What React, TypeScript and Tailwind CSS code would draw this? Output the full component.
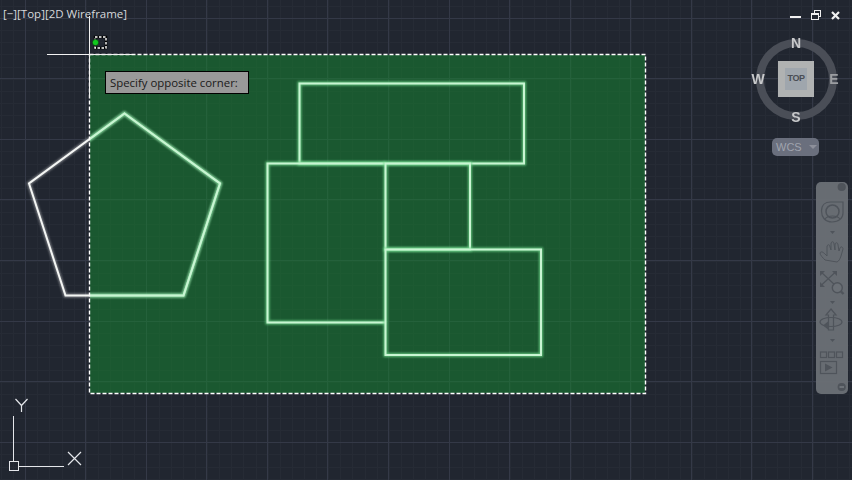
const VX = [25, 85, 146, 206, 267, 327, 388, 449, 509, 570, 630, 691, 751, 812];
const HY = [18, 78, 139, 199, 260, 321, 381, 442];

const PENTAGON = '124.500,113.500 220,183.500 183.500,295.500 65.500,295.500 29,183.500';
const SHAPES = [
  'M299.500 163.500V83.500H524V163.500Z',
  'M385.500 163.500H267.500V322.500H385.500',
  'M385.500 163.500H470V249.500H385.500Z',
  'M385.500 249.500H541V355H385.500Z',
];

const ICON = '#4f545b';

function minorLines() {
  const out: { x?: number; y?: number }[] = [];
  for (let i = 0; i < 72; i++) out.push({ x: 0.5 + Math.round(1 + i * 12.12) });
  for (let i = 0; i < 40; i++) out.push({ y: 0.5 + Math.round(6 + i * 12.12) });
  return out;
}

function Canvas() {
  return (
    <svg width="852" height="480" className="absolute inset-0 block">
      <defs>
        <filter id="glow" x="-20%" y="-20%" width="140%" height="140%">
          <feGaussianBlur stdDeviation="1.200" />
        </filter>
        <clipPath id="sel">
          <rect x="90" y="55" width="555" height="338" />
        </clipPath>
      </defs>

      {/* grid */}
      {minorLines().map((l, i) =>
        l.x !== undefined ? (
          <line key={i} x1={l.x} x2={l.x} y1="0" y2="480" stroke="#262b35" />
        ) : (
          <line key={i} x1="0" x2="852" y1={l.y} y2={l.y} stroke="#262b35" />
        ),
      )}
      {VX.map((x) => (
        <line key={x} x1={x + 0.5} x2={x + 0.5} y1="0" y2="480" stroke="#343947" />
      ))}
      {HY.map((y) => (
        <line key={y} x1="0" x2="852" y1={y + 0.5} y2={y + 0.5} stroke="#343947" />
      ))}

      {/* selection window */}
      <rect x="90" y="55" width="555" height="338" fill="#148a30" fillOpacity="0.5" />

      {/* pentagon, whiter outside the window */}
      <polygon points={PENTAGON} fill="none" stroke="#ffffff" strokeOpacity="0.4" strokeWidth="4" filter="url(#glow)" />
      <polygon points={PENTAGON} fill="none" stroke="#f4f6f4" strokeWidth="2" />
      <g clipPath="url(#sel)">
        <polygon points={PENTAGON} fill="none" stroke="#6fd68c" strokeOpacity="0.8" strokeWidth="4" filter="url(#glow)" />
        <polygon points={PENTAGON} fill="none" stroke="#c9f5d3" strokeWidth="2" />
      </g>

      {SHAPES.map((d) => (
        <g key={d} fill="none">
          <path d={d} stroke="#6fd68c" strokeOpacity="0.8" strokeWidth="4" filter="url(#glow)" />
          <path d={d} stroke="#c9f5d3" strokeWidth="2" />
        </g>
      ))}

      {/* selection outline */}
      <rect x="89.500" y="54.500" width="556" height="339" fill="none" stroke="#ffffff" strokeWidth="1.400" strokeDasharray="4 2" />

      {/* crosshair */}
      <path d="M47 54.500H132M89.500 16V98" stroke="#f2f2f2" fill="none" />
      <rect x="95" y="37" width="11" height="11" fill="none" stroke="#000000" strokeWidth="2.500" />
      <rect x="95" y="37" width="11" height="11" fill="none" stroke="#ffffff" strokeWidth="1.400" strokeDasharray="2.500 1.500" />
      <circle cx="95.500" cy="42.500" r="3.200" fill="#12c81e" stroke="#10141a" strokeWidth="0.600" />

      {/* ucs icon */}
      <g stroke="#e4e6ea" fill="none">
        <path d="M13.500 416V461M19 466.500H64" />
        <rect x="9.500" y="461.500" width="9" height="9" />
        <path d="M15.500 399L21.500 405.500L27.500 399M21.500 405.500V412" strokeWidth="1.200" />
        <path d="M68 452L81 465M81 452L68 465" strokeWidth="1.200" />
      </g>
    </svg>
  );
}

function NavBarIcons() {
  return (
    <svg width="32" height="212" className="block" fill="none" stroke={ICON} strokeWidth="1.200">
      <circle cx="25.700" cy="5" r="3.500" fill={ICON} />
      {/* steering wheel */}
      <path d="M5.500 29c0-6 4-9 9-9H27v11c0 5-4 9-11 9S5.500 35 5.500 29Z" />
      <circle cx="16.500" cy="29.500" r="6.500" strokeWidth="1.500" />
      <path d="M9 37c2-2.500 4-3 7.500-3s5.500.5 7.500 3" />
      <path d="M14 49H19L16.500 52Z" fill={ICON} stroke="none" />
      {/* hand */}
      <path d="M9 78c-2-2-5-5-5-7 1-2 3-1 5 1l2 2V65c0-3 3-3 3 0l1 3v-6c0-3 3-3 3 0l1 6v-5c0-3 3-3 3 0l1 6 1-3c1-2 3-1 3 1l-2 7c-1 3-2 5-4 6Z" strokeWidth="1" />
      {/* zoom arrows */}
      <path d="M4.500 89.500L20 104M20 89.500L4.500 104" strokeWidth="1.200" />
      <path d="M4 89H9L4 94ZM21 89H16L21 94ZM4 105H9L4 100Z" fill={ICON} stroke="none" />
      <circle cx="21.300" cy="105.700" r="5" fill="#6b7076" strokeWidth="1.400" />
      <path d="M25 109.500L27.500 112" strokeWidth="2.400" />
      <path d="M14 119H19L16.500 122Z" fill={ICON} stroke="none" />
      {/* orbit */}
      <path d="M15 127L20 133H17.500V148H12.500V133H10Z" />
      <ellipse cx="15" cy="140" rx="11" ry="4.500" />
      <path d="M7 143.500L12 139.500V147.500Z" fill={ICON} stroke="none" />
      <path d="M14 157H19L16.500 160Z" fill={ICON} stroke="none" />
      {/* showmotion */}
      <rect x="4.500" y="170" width="6" height="5.500" />
      <rect x="12.500" y="170" width="6" height="5.500" />
      <rect x="20.500" y="170" width="6" height="5.500" />
      <rect x="4.500" y="179.500" width="16" height="12" />
      <path d="M9 181.500L16.500 185.500L9 189.500Z" fill={ICON} stroke="none" />
      <circle cx="25.700" cy="205" r="3.500" fill={ICON} />
      <path d="M23.500 205H28" stroke="#82878c" />
    </svg>
  );
}

function Compass() {
  const letter = 'absolute w-4 text-center text-[14px] leading-4 font-bold blur-[0.3px]';
  return (
    <div className="relative mt-[11px] flex h-[88px] w-[88px] items-center justify-center">
      <div className="flex h-[81px] w-[81px] items-center justify-center rounded-full border-[8px] border-[#4a4e57]">
        <div className="flex h-9 w-9 items-center justify-center bg-[#b0b2b2]">
          <div className="flex h-[22px] w-[22px] items-center justify-center bg-[#9fa6ad] text-[9px] font-bold tracking-[-0.5px] text-[#4a4e55]">
            TOP
          </div>
        </div>
      </div>
      <span className={`${letter} left-9 top-0 text-[#c8c9cb]`}>N</span>
      <span className={`${letter} left-9 top-[74px] text-[#c8c9cb]`}>S</span>
      <span className={`${letter} left-[-2px] top-[36px] text-[#c8c9cb]`}>W</span>
      <span className={`${letter} left-[74px] top-[36px] text-[#9c9ea2]`}>E</span>
    </div>
  );
}

export default function App() {
  return (
    <div className="relative h-[480px] w-[852px] overflow-hidden bg-[#212630] font-['Liberation_Sans',sans-serif]">
      <Canvas />

      <div className="absolute left-[105px] top-[71px] flex h-[23px] w-[144px] items-center border border-black bg-[#999999] pl-1 font-['Open_Sans',sans-serif] text-[11.400px] text-[#1a1a1a]">
        Specify opposite corner:
      </div>

      <div className="absolute inset-0 flex justify-between">
        <div className="pl-[3px] pt-[6px] font-['Open_Sans',sans-serif] text-[11.500px] leading-4 text-[#d6d8dc]">
          [−][Top][2D Wireframe]
        </div>

        <div className="flex w-[100px] flex-col">
          <div className="flex h-6 items-start justify-end gap-[10px] pr-3 pt-[10px]">
            <span className="mt-[6px] h-[2px] w-[11px] bg-[#f0f0f0]" />
            <span className="relative h-[10px] w-[10px]">
              <span className="absolute right-0 top-0 h-[7px] w-[7px] border border-[#f0f0f0]" />
              <span className="absolute bottom-0 left-0 h-[7px] w-2 border border-t-2 border-[#f0f0f0] bg-[#212630]" />
            </span>
            <svg width="9" height="9" className="mt-px block" fill="none" stroke="#f0f0f0" strokeWidth="2.200">
              <path d="M1 1L8 8M8 1L1 8" />
            </svg>
          </div>

          <Compass />

          <div className="ml-5 mt-[15px] flex h-[18px] w-[47px] items-center rounded-[5px] bg-[#6a6f7d] pl-1 text-[11px] leading-none text-[#a0a4ae]">
            WCS
            <span className="ml-[7px] h-0 w-0 border-x-4 border-t-4 border-x-transparent border-t-[#8d909b]" />
          </div>

          <div className="ml-16 mt-[26px] h-[212px] w-8 rounded-[5px] bg-[#6b7076]/95">
            <NavBarIcons />
          </div>
        </div>
      </div>
    </div>
  );
}
